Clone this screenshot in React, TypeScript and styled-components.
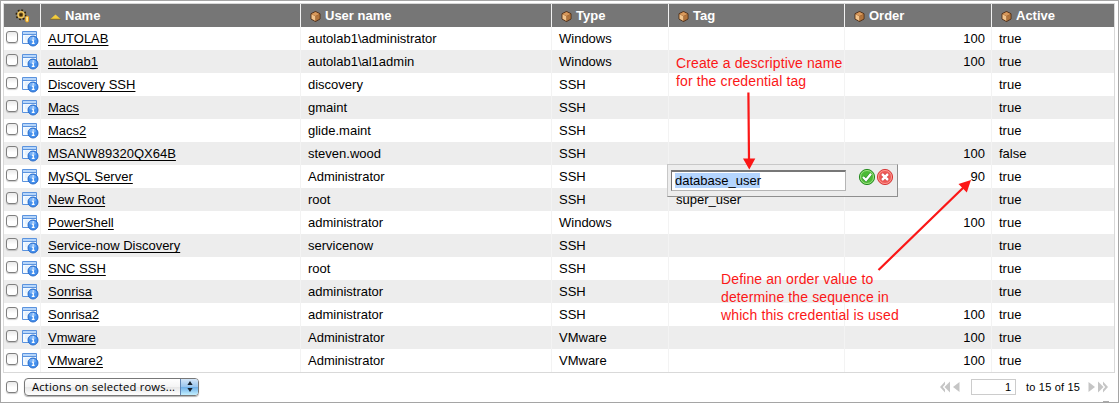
import React from "react";
import styled, { createGlobalStyle } from "styled-components";

const GlobalStyle = createGlobalStyle`
  * { box-sizing: border-box; }
  body { margin: 0; background: #fff; font-family: "Liberation Sans", Arial, sans-serif; color: #000; }
`;

const Page = styled.main`
  position: relative;
  width: 1119px;
  height: 403px;
  overflow: hidden;
  border: 1px solid #a5a5a5;
  padding: 2px;
`;

const Table = styled.section`
  width: 1112px;
  border: 1px solid #d9d9d9;
`;

const columns = "37px 260px 251px 117px 176px 147px 122px";

const HeaderRow = styled.div`
  display: grid;
  grid-template-columns: ${columns};
  height: 23px;
  background: #767676;
`;

const HeaderCell = styled.div`
  display: flex;
  align-items: center;
  gap: 4px;
  padding: 0 0 1px 9px;
  color: #fff;
  font-size: 13px;
  font-weight: bold;
  white-space: pre;
  border-right: 1px solid #f2f2f2;
  &:last-child { border-right: 0; }
  svg { margin-top: 3px; }
`;

const ToolHeader = styled(HeaderCell)`
  padding: 0 0 0 11px;
  svg { margin-top: 1px; }
`;

const Row = styled.div<{ $shaded: boolean }>`
  display: grid;
  grid-template-columns: ${columns};
  height: 23px;
  background: ${(p) => (p.$shaded ? "#ededed" : "#fff")};
`;

const Cell = styled.div<{ $right?: boolean }>`
  padding: 0 6px 0 7px;
  font-size: 13px;
  line-height: 23px;
  white-space: pre;
  text-align: ${(p) => (p.$right ? "right" : "left")};
  border-right: 1px solid #f3f3f3;
  &:last-child { border-right: 0; }
`;

const ToolCell = styled(Cell)`
  display: flex;
  align-items: flex-start;
  gap: 4px;
  padding: 4px 0 0 2px;
`;

const Check = styled.span`
  display: block;
  flex: none;
  width: 12px;
  height: 12px;
  border: 1px solid #7f7f7f;
  border-radius: 3px;
  background: linear-gradient(#e9e9e9, #fff 55%);
  box-shadow: 0 1px 1px rgba(0, 0, 0, 0.2);
`;

const NameLink = styled.a`
  color: #000;
  text-decoration: underline;
  text-decoration-thickness: 1px;
  text-decoration-skip-ink: none;
  text-underline-offset: 2px;
`;

const Footer = styled.footer`
  display: flex;
  align-items: center;
  height: 27px;
  padding-left: 3px;
`;

const ActionSelect = styled.div`
  display: flex;
  justify-content: space-between;
  width: 175px;
  height: 18px;
  margin-left: 6px;
  padding-left: 7px;
  overflow: hidden;
  border: 1px solid #777;
  border-radius: 4px;
  background: linear-gradient(#fff, #f4f4f4 48%, #e7e7e7 52%, #fff);
  box-shadow: 0 1px 1px rgba(0, 0, 0, 0.3);
  font: 11.2px/16px "Open Sans", sans-serif;
  letter-spacing: 0.2px;
  white-space: nowrap;
`;

const SelectKnob = styled.span`
  display: flex;
  align-items: center;
  justify-content: center;
  width: 18px;
  border-left: 1px solid #6086b5;
  background: linear-gradient(#d4e6f8, #9ac6ee 48%, #6fb0e8 52%, #c3f0ff);
`;

const Pager = styled.nav`
  display: flex;
  align-items: center;
  margin-left: auto;
  padding-right: 7px;
  font-size: 11px;
`;

const PageBox = styled.div`
  width: 45px;
  height: 16px;
  margin: 0 10px 0 11px;
  padding-right: 4px;
  border: 1px solid #ccc;
  line-height: 15px;
  text-align: right;
`;

const PageTotal = styled.span`
  width: 62px;
  letter-spacing: 0.2px;
  white-space: nowrap;
`;

const Editor = styled.div`
  position: absolute;
  left: 666px;
  top: 163px;
  display: flex;
  align-items: flex-start;
  width: 231px;
  height: 33px;
  padding: 5px 3px;
  background: #ededed;
  border: 1px solid;
  border-color: #c8c8c8 #8f8f8f #8f8f8f #c8c8c8;
`;

const EditorInput = styled.div`
  width: 176px;
  height: 21px;
  margin-right: 12px;
  padding: 1px 3px;
  background: #fff;
  border: 1px solid #b5b5b5;
  border-top: 2px solid #777;
  border-left-color: #777;
  font-size: 13px;
`;

const EditorActions = styled.div`
  display: flex;
  margin-top: -2px;
`;

const Selected = styled.span`
  display: block;
  width: 85px;
  height: 15px;
  line-height: 15px;
  background: #b4d5fe;
`;

const Callout = styled.p<{ $x: number; $y: number }>`
  position: absolute;
  left: ${(p) => p.$x}px;
  top: ${(p) => p.$y}px;
  margin: 0;
  color: #fb1717;
  font-size: 14px;
  line-height: 18px;
  letter-spacing: 0.12px;
  white-space: pre;
`;

const Arrows = styled.svg`
  position: absolute;
  left: -1px;
  top: -1px;
`;

const ClippedMark = styled.span`
  position: absolute;
  right: 9px;
  bottom: 0;
  width: 6px;
  height: 1px;
  background: #aaa;
`;

const Icon = styled.svg`
  display: block;
  flex: none;
`;

const Cube = () => (
  <Icon width="11" height="11" viewBox="0 0 11 11">
    <path d="M5.5 .5 10 2.7V8L5.5 10.5 1 8V2.7Z" fill="#8f5727" stroke="#4b2a13" strokeWidth=".9" />
    <path d="M5.5 1 9.5 3 5.5 5 1.5 3Z" fill="#d99a5c" />
    <path d="M1.5 3.2 5.4 5.2V10L1.5 7.7Z" fill="#f2c48c" />
    <path d="M5.8 5.2 9.5 3.3V7.7L5.8 9.8Z" fill="#b1743c" />
  </Icon>
);

const Gear = () => (
  <Icon width="15" height="14" viewBox="0 0 15 14">
    <circle cx="6" cy="5.8" r="4.5" fill="none" stroke="#2e2107" strokeWidth="2" strokeDasharray="1.7 1.8" />
    <circle cx="6" cy="5.8" r="3" fill="#7a571b" stroke="#efc660" strokeWidth="1.5" />
    <circle cx="6" cy="5.8" r="1.2" fill="#33260d" />
    <rect x="10.7" y="7.3" width="2.8" height="5.6" rx="1" fill="#ffe992" stroke="#e89b16" />
  </Icon>
);

const SortUp = () => (
  <Icon width="11" height="6" viewBox="0 0 11 6">
    <path d="M.5 5 5.5 .5 10.5 5Z" fill="#f3cd3c" />
    <path d="M.3 5.2H10.7" stroke="#8b6a12" strokeWidth=".8" />
  </Icon>
);

const RecordIcon = () => (
  <Icon width="17" height="16" viewBox="0 0 17 16">
    <path d="M.5 .5H14.5V12.5H.5Z" fill="#f4faff" stroke="#5b93de" />
    <path d="M1 1H14V3H1Z" fill="#b7d6fa" />
    <path d="M1 3.5H14" stroke="#5b93de" />
    <path d="M3 6H8M3 8H6" stroke="#d7e9fc" />
    <circle cx="11" cy="10" r="5" fill="#4590ed" stroke="#1e62c4" strokeWidth=".9" />
    <ellipse cx="10.6" cy="7.7" rx="3.2" ry="2" fill="#8bbdfa" opacity=".7" />
    <path d="M10.5 7H12M10 9.2H11.3V12.3M9.8 12.4H12.6" fill="none" stroke="#fff" strokeWidth="1.2" />
  </Icon>
);

const Accept = () => (
  <Icon width="18" height="18" viewBox="0 0 18 18">
    <circle cx="9" cy="9" r="7.6" fill="#4cba36" stroke="#258c20" strokeWidth="1" />
    <circle cx="9" cy="9" r="6.5" fill="none" stroke="#a8e68c" strokeWidth=".9" />
    <path d="M5 9 8 12 13 5.8" fill="none" stroke="#278423" strokeWidth="3.4" />
    <path d="M5 9 8 12 13 5.8" fill="none" stroke="#fff" strokeWidth="2.3" />
  </Icon>
);

const Reject = () => (
  <Icon width="18" height="18" viewBox="0 0 18 18">
    <circle cx="9" cy="9" r="7.6" fill="#ed5a57" stroke="#d83839" strokeWidth="1" />
    <circle cx="9" cy="9" r="6.5" fill="none" stroke="#ffa19a" strokeWidth=".9" />
    <path d="M6 6 12 12M12 6 6 12" stroke="#c92d31" strokeWidth="3.6" />
    <path d="M6 6 12 12M12 6 6 12" stroke="#fff" strokeWidth="2.5" />
  </Icon>
);

const PageArrows = ({ forward }: { forward?: boolean }) => (
  <Icon width="21" height="12" viewBox="0 0 21 12">
    <g transform={forward ? "matrix(-1 0 0 1 21 0)" : undefined} fill="#c5c5c5">
      <path d="M6 .5 1 6 6 11.5V8.5L3.8 6 6 3.5Z" />
      <path d="M11 .5 5.5 6 11 11.5Z" />
      <path d="M20.5 1 14 6 20.5 11Z" />
    </g>
  </Icon>
);

const rows = [
  ["AUTOLAB", "autolab1\\administrator", "Windows", "", "100", "true"],
  ["autolab1", "autolab1\\al1admin", "Windows", "", "100", "true"],
  ["Discovery SSH", "discovery", "SSH", "", "", "true"],
  ["Macs", "gmaint", "SSH", "", "", "true"],
  ["Macs2", "glide.maint", "SSH", "", "", "true"],
  ["MSANW89320QX64B", "steven.wood", "SSH", "", "100", "false"],
  ["MySQL Server", "Administrator", "SSH", "", "90", "true"],
  ["New Root", "root", "SSH", "super_user", "", "true"],
  ["PowerShell", "administrator", "Windows", "", "100", "true"],
  ["Service-now Discovery", "servicenow", "SSH", "", "", "true"],
  ["SNC SSH", "root", "SSH", "", "", "true"],
  ["Sonrisa", "administrator", "SSH", "", "", "true"],
  ["Sonrisa2", "administrator", "SSH", "", "100", "true"],
  ["Vmware", "Administrator", "VMware", "", "100", "true"],
  ["VMware2", "Administrator", "VMware", "", "100", "true"],
];

export default function App() {
  return (
    <Page>
      <GlobalStyle />
      <Table>
        <HeaderRow>
          <ToolHeader><Gear /></ToolHeader>
          <HeaderCell><SortUp />Name</HeaderCell>
          {["User name", "Type", "Tag", "Order", "Active"].map((title) => (
            <HeaderCell key={title}><Cube />{title}</HeaderCell>
          ))}
        </HeaderRow>
        {rows.map(([name, user, type, tag, order, active], i) => (
          <Row key={name} $shaded={i % 2 === 1}>
            <ToolCell><Check /><RecordIcon /></ToolCell>
            <Cell><NameLink>{name}</NameLink></Cell>
            <Cell>{user}</Cell>
            <Cell>{type}</Cell>
            <Cell>{tag}</Cell>
            <Cell $right>{order}</Cell>
            <Cell>{active}</Cell>
          </Row>
        ))}
      </Table>
      <Footer>
        <Check />
        <ActionSelect>
          Actions on selected rows...
          <SelectKnob>
            <Icon width="6" height="11" viewBox="0 0 6 11">
              <path d="M3 0 5.6 4H.4ZM.4 7H5.6L3 11Z" fill="#16202c" />
            </Icon>
          </SelectKnob>
        </ActionSelect>
        <Pager>
          <PageArrows />
          <PageBox>1</PageBox>
          <PageTotal>to 15 of 15</PageTotal>
          <PageArrows forward />
        </Pager>
      </Footer>
      <Editor>
        <EditorInput><Selected>database_user</Selected></EditorInput>
        <EditorActions>
          <Accept />
          <Reject />
        </EditorActions>
      </Editor>
      <Callout $x={675} $y={53}>{"Create a descriptive name\nfor the credential tag"}</Callout>
      <Callout $x={720} $y={269}>{"Define an order value to\ndetermine the sequence in\nwhich this credential is used"}</Callout>
      <Arrows width="1119" height="403" viewBox="0 0 1119 403">
        <path d="M748.4 92.5 749 160M878.5 270 964 187" stroke="#fb1717" strokeWidth="2.2" />
        <path d="M743 158.5H755.3L749.3 169.5ZM958.5 184 971 180 966.8 192.5Z" fill="#fb1717" />
      </Arrows>
      <ClippedMark />
    </Page>
  );
}
